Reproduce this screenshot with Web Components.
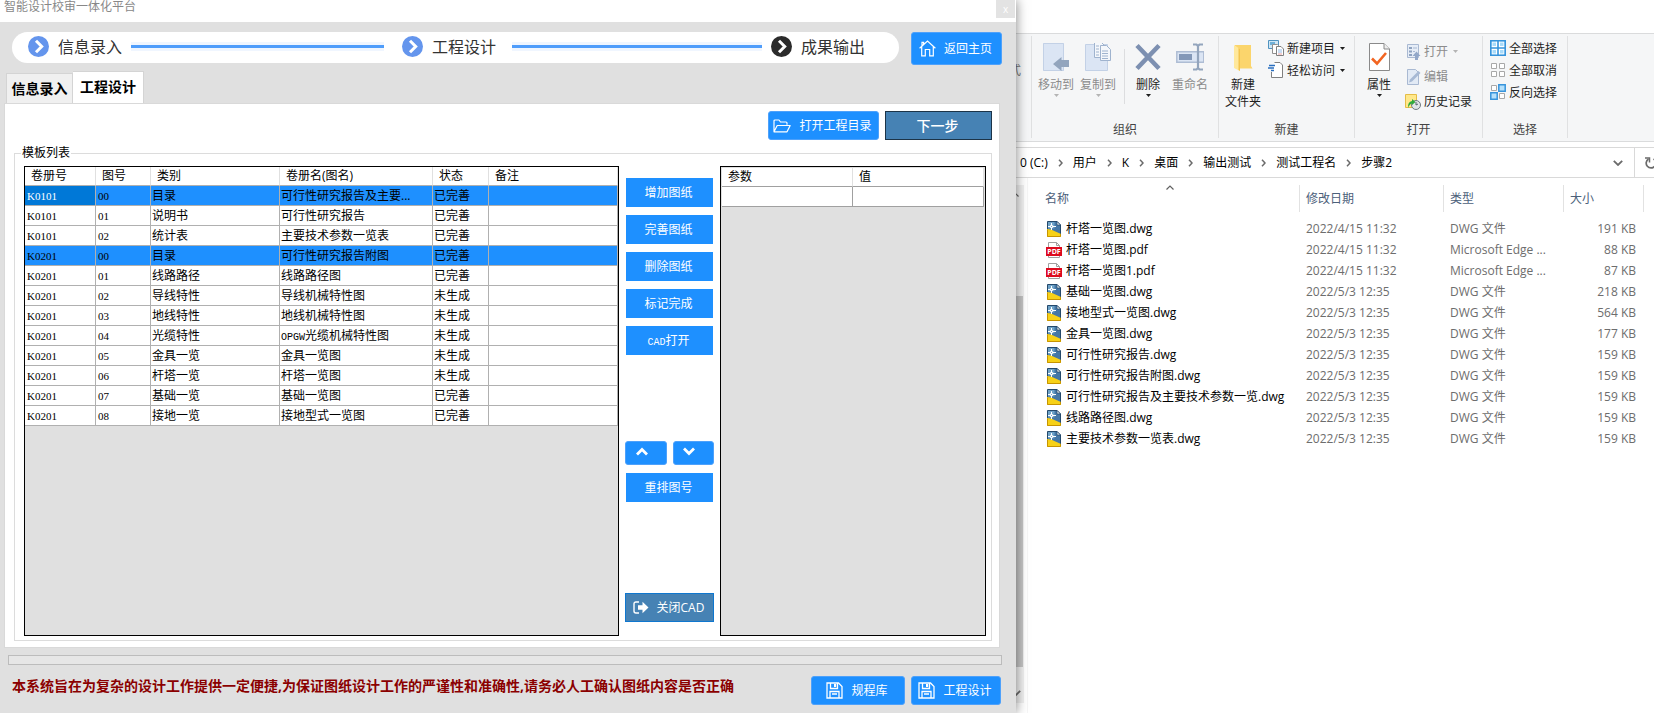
<!DOCTYPE html>
<html lang="zh-CN">
<head>
<meta charset="utf-8">
<title>智能设计校审一体化平台</title>
<style>
  html, body { margin: 0; }
  body {
    background: #fff;
    color: #000;
    font: 12px/16px "Open Sans", "Noto Sans CJK SC", sans-serif;
  }
</style>
</head>
<body>
<desk-top></desk-top>
<script>
const ICONS = {
  next: ['0 0 21 21', '<circle cx="10.500" cy="10.500" r="10.500" fill="currentColor"/><path d="M8 4.800l5.700 5.700L8 16.200" fill="none" stroke="#fff" stroke-width="3"/>'],
  home: ['0 0 17 17', '<g fill="none" stroke="#fff" stroke-width="1.200"><path d="M.6 8.200L8.500 1l7.900 7.200M2.700 6.800V15.800h3.600V9.500h4.400v6.300h3.600V6.800M3 5.800V2.300h1.600v2"/></g>'],
  folder: ['0 0 18 14', '<path d="M1 12.500V2q0-1 1-1h4l1.500 2H13q1 0 1 1v1.800M1 12.800L4.200 6.500h13L14 12.800z" fill="none" stroke="#fff" stroke-width="1.200" stroke-linejoin="round"/>'],
  save: ['0 0 17 17', '<path d="M1 1h11.500L16 4.500V16H1zM4.500 1v5.500h7V1M4 16V9.500h9V16M6 12h5" fill="none" stroke="#fff" stroke-width="1.300"/><path d="M8 2h2.200v3H8z" fill="#fff"/>'],
  exit: ['0 0 16 13', '<path d="M6 1H3Q1 1 1 3v7q0 2 2 2h3" fill="none" stroke="#fff" stroke-width="1.400"/><path d="M5 4.200h4.500V.8L15.500 6.500 9.500 12.200V8.800H5z" fill="#fff"/>'],
  up: ['0 0 12 9', '<path d="M1 7.500l5-5 5 5" fill="none" stroke="#fff" stroke-width="2.800"/>'],
  down: ['0 0 12 9', '<path d="M1 1.500l5 5 5-5" fill="none" stroke="#fff" stroke-width="2.800"/>'],
  move: ['0 0 28 28', '<path d="M1 0h21v28H1z" fill="#dbe5f4"/><path d="M1.500.5h20v27h-20z" fill="none" stroke="#c3d1e6"/><path d="M27 17v7h-7.500v4L11 21l8.500-7v3z" fill="#93a5bd"/>'],
  copy: ['0 0 28 28', '<path d="M1.500 1.500h22v26h-22z" fill="#dbe5f4" stroke="#c3d1e6"/><g fill="#f4f7fb" stroke="#9fb3ce"><path d="M10.500-.5h7l3 3v12h-10z"/><path d="M16.500 2.500h6l4 4v11h-10z"/></g><path d="M12 3h3M12 6h3M12 9h3M12 12h3M18 8h6M18 10.500h6M18 13h6M18 15.500h6" stroke="#9fb3ce"/>'],
  del: ['0 0 28 28', '<path d="M3 2.500l22 23M25 2.500l-22 23" stroke="#7d90b1" stroke-width="4.600"/>'],
  rename: ['0 0 28 28', '<path d="M.8 8.800h27v10.400H.8z" fill="#dbe5f4" stroke="#aebdd4" stroke-width="1.500"/><path d="M3 11h13v6H3z" fill="#8398b8"/><path d="M17 1.500h3.500l1.500 1.500 1.500-1.500H27M22 3v22.500M17 26.500h3.500l1.500-1.500 1.500 1.500H27" fill="none" stroke="#93a5bd" stroke-width="2.200"/>'],
  newfolder: ['0 0 28 28', '<path d="M6 2h16v21l1.500 2.500H7z" fill="#fbd56c"/><path d="M5 2l6 4v22l-6-3z" fill="#ffe89b"/><path d="M11 6v22l-1.500-1V5z" fill="#f3c44e"/>'],
  prop: ['0 0 28 28', '<path d="M4.500.5h14.500l5.500 5.500v21.500h-20z" fill="#fff" stroke="#8a8a8a"/><path d="M19 .5V6h5.500" fill="#eee" stroke="#8a8a8a"/><path d="M7 15.500l5 5L21 10" fill="none" stroke="#f26522" stroke-width="2.600"/>'],
  newitem: ['0 0 16 16', '<path d="M.5.5h10v8H.5z" fill="#cfe6f5" stroke="#4f93c0"/><path d="M2 2h5v3H2z" fill="#6eb0d8"/><path d="M4.500 4.500h5l2 2v7h-7z" fill="#fff" stroke="#909090"/><path d="M8.500 6.500h4.500l2.500 2.500v6.500H8.500z" fill="#fff" stroke="#808080"/><path d="M10 10h4M10 12h4" stroke="#8fb9e6"/><path d="M10 14h4" stroke="#e79a9a"/>'],
  access: ['0 0 16 16', '<path d="M6.500.5H12l2.500 2.500v12.500H3.500V10" fill="#fff" stroke="#808080"/><path d="M1 3.500h6M0 6h6M3 8.500h3" stroke="#2a6fc0" stroke-width="1.300"/>'],
  open: ['0 0 16 16', '<path d="M2.500.5h11v13h-11z" fill="#e6edf7" stroke="#a9b9d2"/><path d="M4 3h3v2H4zM4 6.500h3v2H4zM4 10h3v2H4z" fill="#8fa3c0"/><path d="M8 4h4M8 7.500h2" stroke="#a9b9d2"/><path d="M10 16v-4H7.500l4-4.500 4 4.500H13v4z" fill="#93a8c9"/>'],
  edit: ['0 0 16 16', '<path d="M2.500.5h8l3 3v12h-11z" fill="#e2eaf5" stroke="#a9b9d2"/><path d="M4 13.500l1-3L13.500 2l2 2L7 12.500z" fill="#a7b9d4"/>'],
  history: ['0 0 16 16', '<path d="M.5.5h11v13H.5z" fill="#ffe88b" stroke="#e5bd47"/><circle cx="11" cy="11" r="4.500" fill="#dfe5e8" stroke="#707a80"/><path d="M11 8v3l2-1" fill="none" stroke="#56636b"/><path d="M3 14q-.5-6 4-7V5l3.500 3L7 11V9.500Q4.500 10 3 14z" fill="#2eab3a"/>'],
  all: ['0 0 16 16', '<path d="M.8.800h14.400v14.400H.8z" fill="#a9dbfa"/><path d="M8 0v16M0 8h16" stroke="#fff" stroke-width="4"/><path d="M2 2h12v12H2z" fill="none" stroke="#fff"/><path d="M.8.800h14.400v14.400H.8zM8 .8v14.400M.8 8h14.400" fill="none" stroke="#3794dc" stroke-width="1.600"/>'],
  none: ['0 0 16 16', '<path d="M1.500 1.500h5v5h-5zM9.500 1.500h5v5h-5zM1.500 9.500h5v5h-5zM9.500 9.500h5v5h-5z" fill="#fff" stroke="#a8a8a8"/>'],
  invert: ['0 0 16 16', '<path d="M1.500 1.500h5v5h-5zM9.500 9.500h5v5h-5z" fill="#fff" stroke="#a8a8a8"/><path d="M8.800.8h6.400v6.400H8.800zM.8 8.800h6.400v6.400H.8z" fill="#b5e0fb" stroke="#3794dc" stroke-width="1.500"/>'],
  drop: ['0 0 5 3', '<path d="M0 0h5L2.500 3z" fill="currentColor"/>'],
  crumb: ['0 0 5 8', '<path d="M1 .8L4 4 1 7.200" fill="none" stroke="#6b6b6b" stroke-width="1.500"/>'],
  chevdown: ['0 0 10 6', '<path d="M.8.800L5 5 9.200.8" fill="none" stroke="#6b6b6b" stroke-width="1.800"/>'],
  refresh: ['0 0 12 12', '<path d="M3.500 2A4.800 4.800 0 1 0 8.500 2" fill="none" stroke="#6b6b6b" stroke-width="1.700"/><path d="M0 1h4.500v4.500" fill="none" stroke="#6b6b6b" stroke-width="1.500"/>'],
  sort: ['0 0 8 5', '<path d="M.5 4.500L4 1l3.500 3.500" fill="none" stroke="#606060" stroke-width="1.200"/>'],
  dwg: ['0 0 16 16', '<path d="M1.500.5h9.500l3.500 3.500v11.500h-13z" fill="#4577a6" stroke="#24496c"/><path d="M2 1h6.500v6.500H2z" fill="#6fa3c8"/><path d="M1 8l4 .5L15 13v3H1z" fill="#f7d117"/><path d="M1.500 8.500v7h13V13" fill="none" stroke="#c79400"/><path d="M5.500 2v2M5.500 7v2M2 5.500h2M7 5.500h3M4.500 4.500h2v2h-2z" fill="none" stroke="#fff"/><path d="M11 .5V4h3.500z" fill="#fff" stroke="#24496c" stroke-width=".8"/>'],
  pdf: ['0 0 16 16', '<path d="M2.500.5h8l3 3v12h-11z" fill="#fff" stroke="#a0a0a0"/><path d="M10.500.5v3h3" fill="none" stroke="#a0a0a0"/><path d="M0 5h16v9H0z" fill="#dd0a1e"/><text x="8" y="12" text-anchor="middle" font-family="Open Sans" font-size="7" font-weight="700" fill="#fff">PDF</text>']
};
function icon(name) {
  const [box, body] = ICONS[name];
  const [, , w, h] = box.split(' ');
  return `<svg class="icon" viewBox="${box}" width="${w}" height="${h}" aria-hidden="true">${body}</svg>`;
}
const BASE = `<style>
  *, *::before { box-sizing: border-box; }
  :host { box-sizing: border-box; display: block; }
  button { font: inherit; color: inherit; margin: 0; padding: 0; border: 0; background: none; cursor: pointer; white-space: nowrap; }
  a { color: inherit; text-decoration: none; }
  svg { display: block; flex: none; }
  table { border-collapse: separate; border-spacing: 0; table-layout: fixed; width: 100%; }
  th, td { padding: 0; font-weight: 400; text-align: left; white-space: nowrap; overflow: hidden; }
</style>`;
function define(name, render) {
  customElements.define(name, class extends HTMLElement {
    constructor() { super(); this.attachShadow({ mode: 'open' }); }
    connectedCallback() { this.shadowRoot.innerHTML = BASE + render(this); }
  });
}

/* Two windows side by side: the design tool over the file explorer. */
define('desk-top', () => `<style>
  :host { display: grid; grid-template-columns: minmax(0, 1016fr) minmax(0, 638fr); min-height: 100vh; overflow: hidden; }
  design-app { position: relative; z-index: 1; }
</style><design-app></design-app><file-explorer></file-explorer>`);

define('flow-step', el => `<style>
  :host { display: flex; align-items: center; gap: 9px; flex: none; padding-bottom: 2px; font-size: 16px; line-height: 24px; color: #333; }
  svg { color: ${el.hasAttribute('last') ? '#2b2b2b' : '#6495ed'}; margin-bottom: 1px; }
</style>${icon('next')}<slot></slot>`);

define('flow-bar', () => `<style>
  :host { display: flex; align-items: center; height: 31px; padding: 0 34px 0 16px; border-radius: 16px; background: #fff; }
  .line { flex: 1; height: 9px; margin: 0 18px 3px 9px; border: solid #f0f6ff; border-width: 3px 0; background: #4f9dfb; }
  .line.end { margin: 0 9px 3px 16px; }
  .line:not(.end) { flex-grow: 1; flex-basis: 3px; }
</style><flow-step>信息录入</flow-step><span class="line"></span><flow-step>工程设计</flow-step><span class="line end"></span><flow-step last>成果输出</flow-step>`);

/* kind: round (default), flat, steel, outline, arrow */
define('app-button', el => `<style>
  :host { height: 29px; flex: none; }
  button { display: flex; align-items: center; justify-content: center; gap: 8px; width: 100%; height: 100%; padding-right: 2px; color: #fff; background: #1e90ff; border: 1px solid #4ea1fb; border-radius: 3px; }
  :host([kind=flat]) { margin: 0 1px; }
  :host([kind=flat]) button { border: 0; border-radius: 0; }
  :host([kind=steel]) button { background: #4682b4; border-color: #1c3448; border-radius: 0; font-size: 14px; font-weight: 500; }
  :host([kind=outline]) button { background: #4682b4; border-color: #0f77cf; border-radius: 0; }
  :host([kind=arrow]) { height: 24px; }
  :host([kind=arrow]) button { padding: 0 8px 4px 0; }
</style><button type="button" ${el.getAttribute('label') ? `aria-label="${el.getAttribute('label')}"` : ''}>${el.getAttribute('icon') ? icon(el.getAttribute('icon')) : ''}<slot></slot></button>`);

const ROWS = [
  ['K0101', '00', '目录', '可行性研究报告及主要...', '已完善'],
  ['K0101', '01', '说明书', '可行性研究报告', '已完善'],
  ['K0101', '02', '统计表', '主要技术参数一览表', '已完善'],
  ['K0201', '00', '目录', '可行性研究报告附图', '已完善'],
  ['K0201', '01', '线路路径', '线路路径图', '已完善'],
  ['K0201', '02', '导线特性', '导线机械特性图', '未生成'],
  ['K0201', '03', '地线特性', '地线机械特性图', '未生成'],
  ['K0201', '04', '光缆特性', '<span class="mono">OPGW</span>光缆机械特性图', '未生成'],
  ['K0201', '05', '金具一览', '金具一览图', '未生成'],
  ['K0201', '06', '杆塔一览', '杆塔一览图', '未生成'],
  ['K0201', '07', '基础一览', '基础一览图', '已完善'],
  ['K0201', '08', '接地一览', '接地型式一览图', '已完善']
];
const GRID = `
  :host { border: 1px solid #000; background: #e0e0e0; overflow: hidden; }
  th, td { border: solid #b0b0b0; border-width: 0 1px 1px 0; background: #fff; }
  th { height: 19px; padding-left: 6px; line-height: 18px; border-right-color: #e0e0e0; }
  td { height: 20px; padding-left: 1px; line-height: 18px; }`;
define('sheet-grid', () => `<style>${GRID}
  .code { padding-left: 2px; font-family: "Liberation Serif", serif; font-size: 11px; }
  .mono { font-family: "Liberation Mono", monospace; font-size: 10px; line-height: 0; }
  .hit td { background: #1e90ff; }
  .hit td.focus { background: #0078d7; color: #fff; }
  col.a { width: 71px; } col.b { width: 55px; } col.c { width: 129px; } col.d { width: 153px; } col.e { width: 56px; }
</style><table><colgroup><col class="a"><col class="b"><col class="c"><col class="d"><col class="e"><col></colgroup>
<thead><tr>${['卷册号', '图号', '类别', '卷册名(图名)', '状态', '备注'].map(t => `<th>${t}</th>`).join('')}</tr></thead>
<tbody>${ROWS.map((r, i) => `<tr class="${i % 3 === 0 && i < 4 ? 'hit' : ''}">${r.map((c, j) => `<td class="${j < 2 ? 'code' : ''} ${i + j === 0 ? 'focus' : ''}">${c}</td>`).join('')}<td></td></tr>`).join('')}</tbody></table>`);

define('param-grid', () => `<style>${GRID}
  :host { padding: 1px; }
  th, td { border-color: #a0a0a0; }
  th { border-right-color: #e0e0e0; }
</style><table><thead><tr><th>参数</th><th>值</th></tr></thead><tbody><tr><td></td><td></td></tr></tbody></table>`);

define('design-app', () => `<style>
  :host { display: flex; flex-direction: column; background: #e0e0e0; box-shadow: 0 0 11px rgba(0,0,0,.5); }
  header { display: flex; justify-content: space-between; height: 22px; background: #fff; color: #888; }
  header h1 { margin: 0; padding-left: 4px; font-size: 12px; line-height: 14px; font-weight: 400; }
  header button { width: 19px; height: 18px; margin-right: 1px; background: #e3e3e3; color: #fff; font-size: 10px; }
  .top { display: flex; gap: 12px; padding: 10px 14px 0 12px; }
  .top flow-bar { flex: 1; }
  .top app-button { width: 91px; height: 33px; }
  .tabs { display: flex; align-items: flex-end; padding: 6px 0 0 6px; font-size: 14px; font-weight: 700; }
  .tabs button { height: 30px; width: 67px; border: 1px solid #d4d4d4; border-bottom: 0; background: #f0f0f0; }
  .tabs button.on { height: 32px; width: 71px; border-left: 0; background: #fff; padding-bottom: 2px; }
  .page { flex: 1; display: flex; flex-direction: column; margin: 0 16px 0 4px; padding: 7px 7px 6px 9px; background: #fff; border: 1px solid #d9d9d9; }
  .tools { display: flex; justify-content: flex-end; gap: 6px; padding-bottom: 5px; }
  .tools .open { width: 111px; } .tools .next { width: 107px; }
  fieldset { flex: 1; display: flex; margin: 0; padding: 5px 5px 4px 9px; border: 1px solid #dcdcdc; min-width: 0; }
  legend { margin-left: -3px; padding: 0 1px; line-height: 16px; }
  sheet-grid { flex: 1; min-width: 0; }
  param-grid { width: 266px; }
  .side { display: flex; flex-direction: column; gap: 8px; width: 101px; padding: 12px 6px 14px; }
  .pair { display: flex; gap: 6px; margin-top: 78px; }
  .pair app-button { flex: 1; }
  .side .close { margin-top: auto; }
  .mono { font-family: "Liberation Mono", monospace; font-size: 10px; line-height: 0; }
  progress { appearance: none; display: block; height: 10px; margin: 7px 14px 0 8px; width: auto; border: 1px solid #bcbcbc; background: #e6e6e6; }
  progress::-webkit-progress-bar { background: #e6e6e6; }
  footer { display: flex; align-items: center; gap: 6px; padding: 11px 15px 8px 12px; }
  footer p { flex: 1; margin: 0; padding-bottom: 9px; white-space: nowrap; font-size: 14px; font-weight: 700; line-height: 20px; color: #8b0000; }
  .lib { width: 94px; } .proj { width: 90px; }
</style>
<header><h1>智能设计校审一体化平台</h1><button type="button">x</button></header>
<div class="top"><flow-bar></flow-bar><app-button icon="home">返回主页</app-button></div>
<nav class="tabs"><button type="button">信息录入</button><button type="button" class="on">工程设计</button></nav>
<main class="page">
  <div class="tools"><app-button class="open" icon="folder">打开工程目录</app-button><app-button class="next" kind="steel">下一步</app-button></div>
  <fieldset><legend>模板列表</legend>
    <sheet-grid></sheet-grid>
    <div class="side">
      <app-button kind="flat">增加图纸</app-button><app-button kind="flat">完善图纸</app-button><app-button kind="flat">删除图纸</app-button><app-button kind="flat">标记完成</app-button><app-button kind="flat"><span><span class="mono">CAD</span>打开</span></app-button>
      <div class="pair"><app-button kind="arrow" icon="up" label="上移"></app-button><app-button kind="arrow" icon="down" label="下移"></app-button></div>
      <app-button kind="flat">重排图号</app-button>
      <app-button class="close" kind="outline" icon="exit">关闭CAD</app-button>
    </div>
    <param-grid></param-grid>
  </fieldset>
</main>
<progress value="0" max="100" aria-label="进度"></progress>
<footer><p>本系统旨在为复杂的设计工作提供一定便捷,为保证图纸设计工作的严谨性和准确性,请务必人工确认图纸内容是否正确</p><app-button class="lib" icon="save">规程库</app-button><app-button class="proj" icon="save">工程设计</app-button></footer>`);

/* Ribbon command: large (icon on top) or small (icon beside the text). */
define('ribbon-button', el => `<style>
  :host { width: 42px; flex: none; color: #1e1e1e; }
  :host([off]) { color: #8c8c8c; }
  :host([off]) .drop { color: #b4b4b4; }
  button { display: flex; flex-direction: column; align-items: center; width: 100%; padding-top: 7px; line-height: 17px; }
  .text { padding-top: 5px; white-space: pre-line; }
  .drop { display: block; margin-top: 1px; }
  :host([small]) { width: auto; }
  :host([small]) button { flex-direction: row; gap: 3px; height: 22px; padding: 0; }
  :host([small]) .text { padding: 0; }
  :host([small]) .drop { margin: 0 0 0 2px; }
  :host([tall]) button { height: 25px; }
</style><button type="button" ${el.hasAttribute('off') ? 'disabled' : ''}>${icon(el.getAttribute('icon'))}<span class="text"><slot></slot></span>${el.hasAttribute('menu') ? `<span class="drop">${icon('drop')}</span>` : ''}</button>`);

define('ribbon-group', el => `<style>
  :host { display: flex; flex-direction: column; flex: none; margin: 2px 0 3px; border-right: 1px solid #e0e1e2; overflow: hidden; }
  .body { flex: 1; display: flex; align-items: flex-start; padding-left: 3px; }
  .label { line-height: 16px; text-align: center; color: #444; }
</style><div class="body"><slot></slot></div><div class="label">${el.getAttribute('label') || ''}</div>`);

const FILES = [
  ['杆塔一览图.dwg', '2022/4/15 11:32', 191], ['杆塔一览图.pdf', '2022/4/15 11:32', 88], ['杆塔一览图1.pdf', '2022/4/15 11:32', 87],
  ['基础一览图.dwg', '2022/5/3 12:35', 218], ['接地型式一览图.dwg', '2022/5/3 12:35', 564], ['金具一览图.dwg', '2022/5/3 12:35', 177],
  ['可行性研究报告.dwg', '2022/5/3 12:35', 159], ['可行性研究报告附图.dwg', '2022/5/3 12:35', 159], ['可行性研究报告及主要技术参数一览.dwg', '2022/5/3 12:35', 159],
  ['线路路径图.dwg', '2022/5/3 12:35', 159], ['主要技术参数一览表.dwg', '2022/5/3 12:35', 159]
];
define('file-list', () => `<style>
  :host { padding: 7px 10px 0 0; }
  col.date { width: 144px; } col.type { width: 120px; } col.size { width: 80px; }
  th { position: relative; height: 27px; padding-left: 6px; border-right: 1px solid #e2e2e2; color: #4c607a; }
  th svg { position: absolute; top: 0; left: 51%; }
  tbody::before { content: ""; display: block; height: 6px; }
  td { height: 21px; padding-left: 6px; line-height: 20px; color: #6d6d6d; }
  th:first-child { padding-left: 17px; }
  td:first-child { padding-left: 18px; color: #000; }
  td:last-child { padding-right: 8px; text-align: right; }
  .file { display: flex; align-items: center; gap: 4px; }
</style><table><colgroup><col><col class="date"><col class="type"><col class="size"></colgroup>
<thead><tr><th>名称${icon('sort')}</th><th>修改日期</th><th>类型</th><th>大小</th></tr></thead>
<tbody>${FILES.map(([n, d, s]) => `<tr><td><a class="file" href="#">${icon(n.slice(-3))}${n}</a></td><td>${d}</td><td>${n.endsWith('pdf') ? 'Microsoft Edge ...' : 'DWG 文件'}</td><td>${s} KB</td></tr>`).join('')}</tbody></table>`);

define('file-explorer', () => `<style>
  :host { display: flex; flex-direction: column; min-width: 0; background: #fff; overflow: hidden; padding-top: 33px; }
  .ribbon { display: flex; height: 109px; border: solid #dadbdc; border-width: 1px 0; background: #f5f6f7; }
  .g0 { width: 16px; color: #777; } .g1 { width: 187px; } .g2 { width: 136px; } .g3 { width: 128px; } .g4 { width: 85px; }
  .cut { margin-left: -10px; padding-top: 27px; }
  .rule { width: 1px; height: 55px; margin: 13px 2px 0 5px; background: #dcdddf; }
  .stack { padding: 1px 0 0 4px; }
  .g3 .stack { padding: 3px 0 0 5px; }
  .address { display: flex; align-items: center; height: 31px; margin-top: 5px; border: solid #d9d9d9; border-width: 1px 0; padding-left: 4px; }
  .address a { white-space: nowrap; }
  .sep { flex: none; width: 25px; display: flex; justify-content: center; }
  .open { margin-left: auto; padding-right: 11px; }
  .again { width: 20px; height: 100%; padding-left: 10px; border-left: 1px solid #d9d9d9; }
  .body { flex: 1; display: flex; }
  .scroll { display: flex; flex-direction: column; align-items: flex-start; width: 8px; margin: 7px 2px 10px 0; background: #f0f0f0; }
  .scroll svg { margin: 7px 0 7px -5px; }
  .thumb { flex: 372; width: 7px; background: #c4c4c4; margin-bottom: 16px; }
  .gap { flex: 92; }
  file-list { flex: 1; min-width: 0; margin-left: 1px; border-left: 1px solid #f5f5f5; }
</style>
<div class="ribbon">
  <ribbon-group class="g0"><span class="cut">式</span></ribbon-group>
  <ribbon-group class="g1" label="组织"><ribbon-button icon="move" off menu>移动到</ribbon-button><ribbon-button icon="copy" off menu>复制到</ribbon-button><span class="rule"></span><ribbon-button icon="del" menu>删除</ribbon-button><ribbon-button icon="rename" off>重命名</ribbon-button></ribbon-group>
  <ribbon-group class="g2" label="新建"><ribbon-button icon="newfolder">新建<br>文件夹</ribbon-button><div class="stack"><ribbon-button small menu icon="newitem">新建项目</ribbon-button><ribbon-button small menu icon="access">轻松访问</ribbon-button></div></ribbon-group>
  <ribbon-group class="g3" label="打开"><ribbon-button icon="prop" menu>属性</ribbon-button><div class="stack"><ribbon-button small tall off menu icon="open">打开</ribbon-button><ribbon-button small tall off icon="edit">编辑</ribbon-button><ribbon-button small tall icon="history">历史记录</ribbon-button></div></ribbon-group>
  <ribbon-group class="g4" label="选择"><div class="stack"><ribbon-button small icon="all">全部选择</ribbon-button><ribbon-button small icon="none">全部取消</ribbon-button><ribbon-button small icon="invert">反向选择</ribbon-button></div></ribbon-group>
</div>
<nav class="address">${['0 (C:)', '用户', 'K', '桌面', '输出测试', '测试工程名', '步骤2'].map(t => `<a href="#">${t}</a>`).join(`<span class="sep">${icon('crumb')}</span>`)}<button type="button" class="open" aria-label="展开">${icon('chevdown')}</button><button type="button" class="again" aria-label="刷新">${icon('refresh')}</button></nav>
<div class="body"><div class="scroll">${icon('sort')}<span class="gap"></span><span class="thumb"></span>${icon('chevdown')}</div><file-list></file-list></div>`);
</script>
</body>
</html>
